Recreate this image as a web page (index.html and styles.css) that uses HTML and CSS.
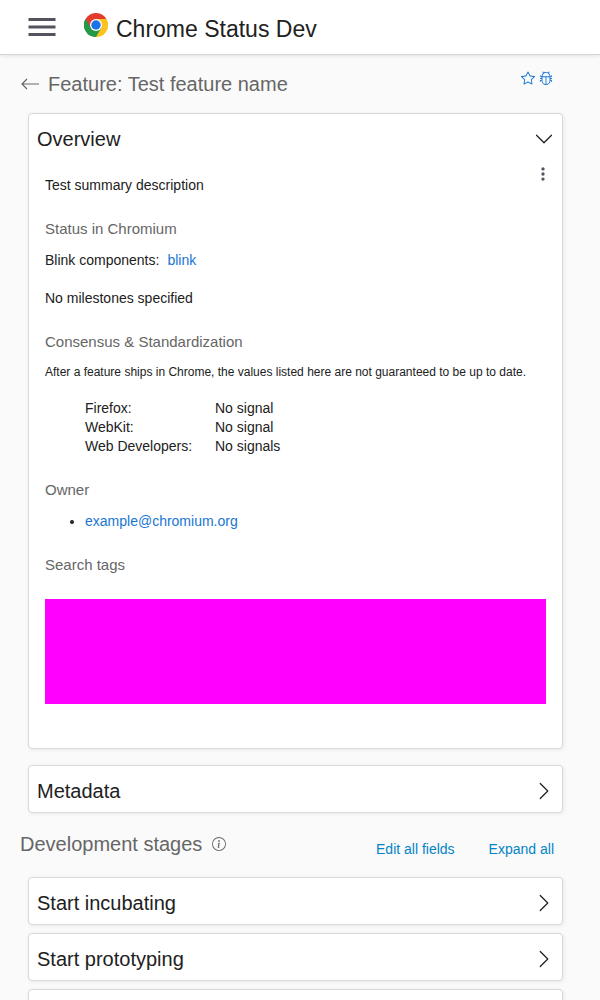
FILE: index.html
```html
<!DOCTYPE html>
<html lang="en">
<head>
<meta charset="utf-8">
<meta name="viewport" content="width=device-width, initial-scale=1">
<title>Chrome Status Dev</title>
<link rel="stylesheet" href="styles.css">
</head>
<body>
<svg class="sprite" aria-hidden="true">
  <symbol id="right" viewBox="0 0 16 16"><path fill-rule="evenodd" d="M4.646 1.646a.5.5 0 0 1 .708 0l6 6a.5.5 0 0 1 0 .708l-6 6a.5.5 0 0 1-.708-.708L10.293 8 4.646 2.354a.5.5 0 0 1 0-.708z"/></symbol>
  <symbol id="down" viewBox="0 0 16 16"><path fill-rule="evenodd" d="M1.646 4.646a.5.5 0 0 1 .708 0L8 10.293l5.646-5.647a.5.5 0 0 1 .708.708l-6 6a.5.5 0 0 1-.708 0l-6-6a.5.5 0 0 1 0-.708z"/></symbol>
</svg>
<header class="topbar">
  <button class="icon-button" aria-label="Menu"><svg class="menu-icon" viewBox="0 0 24 24"><path d="M3 18h18v-2H3v2zm0-5h18v-2H3v2zm0-7v2h18V6H3z"/></svg></button>
  <a class="brand" href="#">
    <svg class="logo" viewBox="0 0 48 48" aria-hidden="true">
      <path fill="#e33b2e" d="M24 24 3.2 12A24 24 0 0 1 44.8 12z"/>
      <path fill="#fcc31e" d="M24 24 44.8 12A24 24 0 0 1 24 48z"/>
      <path fill="#279847" d="M24 24V48A24 24 0 0 1 3.2 12z"/>
      <path fill="#e33b2e" d="M3.2 12H44.8L24 12 13.6 30z"/>
      <path fill="#fcc31e" d="M24 12H44.8A24 24 0 0 1 24 48L34.4 30z"/>
      <path fill="#279847" d="M34.4 30 24 48A24 24 0 0 1 3.2 12L13.6 30z"/>
      <circle cx="24" cy="24" r="12" fill="#fff"/><circle cx="24" cy="24" r="9.5" fill="#1a73e8"/>
    </svg>
    <span class="brand-name">Chrome Status Dev</span>
  </a>
</header>
<main class="page">
  <div class="title-row">
    <a class="back" href="#" aria-label="Back"><svg class="back-icon" viewBox="0 0 20 16"><path d="M19 8H2M7 3 2 8l5 5" fill="none" stroke="currentColor" stroke-width="1.2"/></svg></a>
    <h2 class="page-title">Feature: Test feature name</h2>
    <div class="actions">
      <button class="icon-button" aria-label="Star this feature"><svg class="action-icon" viewBox="0 0 16 16"><path d="M2.866 14.85c-.078.444.36.791.746.593l4.39-2.256 4.389 2.256c.386.198.824-.149.746-.592l-.83-4.73 3.522-3.356c.33-.314.16-.888-.282-.95l-4.898-.696L8.465.792a.513.513 0 0 0-.927 0L5.354 5.12l-4.898.696c-.441.062-.612.636-.283.95l3.523 3.356-.83 4.73zm4.905-2.767-3.686 1.894.694-3.957a.565.565 0 0 0-.163-.505L1.71 6.745l4.052-.576a.525.525 0 0 0 .393-.288L8 2.223l1.847 3.658a.525.525 0 0 0 .393.288l4.052.575-2.906 2.77a.565.565 0 0 0-.163.506l.694 3.957-3.686-1.894a.503.503 0 0 0-.461 0z"/></svg></button>
      <a class="icon-button" href="#" aria-label="Report a bug"><svg class="action-icon" viewBox="0 0 16 16"><path d="M4.355.522a.5.5 0 0 1 .623.333l.291.956A4.979 4.979 0 0 1 8 1c1.007 0 1.946.298 2.731.811l.29-.956a.5.5 0 1 1 .957.29l-.41 1.352A4.985 4.985 0 0 1 13 6h.5a.5.5 0 0 0 .5-.5V5a.5.5 0 0 1 1 0v.5A1.5 1.5 0 0 1 13.5 7H13v1h1.5a.5.5 0 0 1 0 1H13v1h.5a1.5 1.5 0 0 1 1.5 1.5v.5a.5.5 0 1 1-1 0v-.5a.5.5 0 0 0-.5-.5H13a5 5 0 0 1-10 0h-.5a.5.5 0 0 0-.5.5v.5a.5.5 0 1 1-1 0v-.5A1.5 1.5 0 0 1 2.5 10H3V9H1.500a.5.5 0 0 1 0-1H3V7h-.5A1.5 1.5 0 0 1 1 5.500V5a.5.5 0 0 1 1 0v.5a.5.5 0 0 0 .5.5H3c0-1.364.547-2.601 1.432-3.503l-.41-1.352a.5.5 0 0 1 .333-.623zM4 7v4a4 4 0 0 0 3.500 3.970V7H4zm4.500 0v7.970A4 4 0 0 0 12 11V7H8.500zM12 6a3.989 3.989 0 0 0-1.334-2.982A3.983 3.983 0 0 0 8 2a3.983 3.983 0 0 0-2.667 1.018A3.989 3.989 0 0 0 4 6h8z"/></svg></a>
    </div>
  </div>

  <div class="cards">
    <section class="card">
      <button class="card-head" aria-expanded="true"><span>Overview</span><svg class="chevron"><use href="#down"/></svg></button>
      <div class="card-body">
        <div class="summary">
          <p class="text">Test summary description</p>
          <button class="icon-button more" aria-label="More options"><svg class="more-icon" viewBox="0 0 16 16"><circle cx="8" cy="2.200" r="1.900"/><circle cx="8" cy="8" r="1.900"/><circle cx="8" cy="13.800" r="1.900"/></svg></button>
        </div>
        <section class="group">
          <h3 class="subhead">Status in Chromium</h3>
          <p class="text components"><span>Blink components:</span><a class="link" href="#">blink</a></p>
          <p class="text milestones">No milestones specified</p>
        </section>
        <section class="group">
          <h3 class="subhead">Consensus &amp; Standardization</h3>
          <p class="note">After a feature ships in Chrome, the values listed here are not guaranteed to be up to date.</p>
          <dl class="signals">
            <dt>Firefox:</dt><dd>No signal</dd>
            <dt>WebKit:</dt><dd>No signal</dd>
            <dt>Web Developers:</dt><dd>No signals</dd>
          </dl>
        </section>
        <section class="group">
          <h3 class="subhead">Owner</h3>
          <ul class="owners"><li><a class="link" href="#">example@chromium.org</a></li></ul>
        </section>
        <section class="group">
          <h3 class="subhead">Search tags</h3>
          <div class="mask"></div>
        </section>
      </div>
    </section>
    <section class="card metadata"><button class="card-head"><span>Metadata</span><svg class="chevron"><use href="#right"/></svg></button></section>
  </div>

  <div class="stages-row">
    <h2 class="page-title">Development stages</h2>
    <button class="icon-button info" aria-label="About stages"><svg class="info-icon" viewBox="0 0 16 16"><path d="M8 15A7 7 0 1 1 8 1a7 7 0 0 1 0 14zm0 1A8 8 0 1 0 8 0a8 8 0 0 0 0 16z"/><path d="m8.930 6.588-2.290.287-.082.380.450.083c.294.070.352.176.288.469l-.738 3.468c-.194.897.105 1.319.808 1.319.545 0 1.178-.252 1.465-.598l.088-.416c-.2.176-.492.246-.686.246-.275 0-.375-.193-.304-.533L8.930 6.588zM9 4.500a1 1 0 1 1-2 0 1 1 0 0 1 2 0z"/></svg></button>
    <div class="stage-actions"><button class="text-button">Edit all fields</button><button class="text-button">Expand all</button></div>
  </div>

  <div class="cards stages">
    <section class="card"><button class="card-head"><span>Start incubating</span><svg class="chevron"><use href="#right"/></svg></button></section>
    <section class="card"><button class="card-head"><span>Start prototyping</span><svg class="chevron"><use href="#right"/></svg></button></section>
    <section class="card"><button class="card-head" aria-label="Next stage"><span></span><svg class="chevron"><use href="#right"/></svg></button></section>
  </div>
</main>
</body>
</html>
```
FILE: styles.css
```css
* { box-sizing: border-box; }
html { height: 100%; overflow: hidden; }
body {
  height: 100%;
  margin: 0;
  overflow: hidden;
  background: #fafafa;
  color: #212121;
  font: 14px/19px "Liberation Sans", Arial, sans-serif;
}
h2, h3, p, dl, dd, ul { margin: 0; padding: 0; font-weight: 400; }
a { text-decoration: none; color: inherit; }
button { font: inherit; color: inherit; background: none; border: 0; padding: 0; cursor: pointer; }
svg { display: block; fill: currentColor; }
.sprite { display: none; }
.icon-button { display: block; }

.topbar {
  display: flex;
  align-items: center;
  gap: 24px;
  height: 55px;
  padding-left: 24px;
  background: #fff;
  border-bottom: 1px solid #d6d6d6;
  box-shadow: 0 1px 4px rgba(0, 0, 0, 0.1);
}
.menu-icon { width: 36px; height: 36px; color: #57535e; }
.brand { display: flex; align-items: flex-start; gap: 8px; padding-top: 1px; }
.logo { width: 24px; height: 24px; }
.brand-name { font-size: 23px; line-height: 28px; padding-top: 2px; }

.page { padding: 0 20px; }
.title-row { display: flex; align-items: center; padding-top: 16px; }
.back { color: #666; margin-right: 8px; }
.back-icon { width: 20px; height: 16px; }
.page-title { font-size: 20px; line-height: 26px; color: #666; }
.actions { display: flex; align-self: flex-start; gap: 4px; margin-left: auto; padding-right: 27px; color: #1976d2; }
.action-icon { width: 14px; height: 14px; }

.cards { margin: 16px 17px 0 8px; }
.card {
  background: #fff;
  border: 1px solid #d9d9d9;
  border-radius: 4px;
  box-shadow: 1px 1px 4px rgba(0, 0, 0, 0.07);
}
.metadata { margin-top: 16px; }
.card-head {
  display: flex;
  align-items: center;
  justify-content: space-between;
  width: 100%;
  min-height: 46px;
  padding: 4px 8px 0;
  text-align: left;
  font-size: 20px;
  line-height: 26px;
}
.chevron { width: 20px; height: 20px; }
.card-body { padding: 8px 16px 44px; }
.summary { display: flex; justify-content: space-between; padding-top: 8px; }
.more { align-self: flex-start; margin: -10px -5px 0 0; color: #57535e; }
.more-icon { width: 16px; height: 16px; padding: 1px; }
.group { padding-top: 24px; }
.subhead { font-size: 15px; line-height: 20px; color: #666; }
.link { color: #1976d2; }
.components { display: flex; gap: 8px; padding-top: 12px; }
.milestones { padding-top: 19px; }
.note { font-size: 12px; line-height: 16px; padding-top: 12px; }
.signals { display: grid; grid-template-columns: 130px 1fr; padding: 19px 0 0 40px; }
.owners { padding: 12px 0 0 40px; }
.mask { height: 105px; margin-top: 24px; background: #f0f; }

.stages-row { display: flex; align-items: flex-start; padding-top: 18px; }
.info { margin: 6px 0 0 10px; color: #666; }
.info-icon { width: 14px; height: 14px; }
.stage-actions { display: flex; gap: 34px; margin-left: auto; padding: 8px 26px 2px 0; }
.text-button { color: #0284c7; line-height: 20px; }
.stages { display: grid; gap: 8px; }
```
